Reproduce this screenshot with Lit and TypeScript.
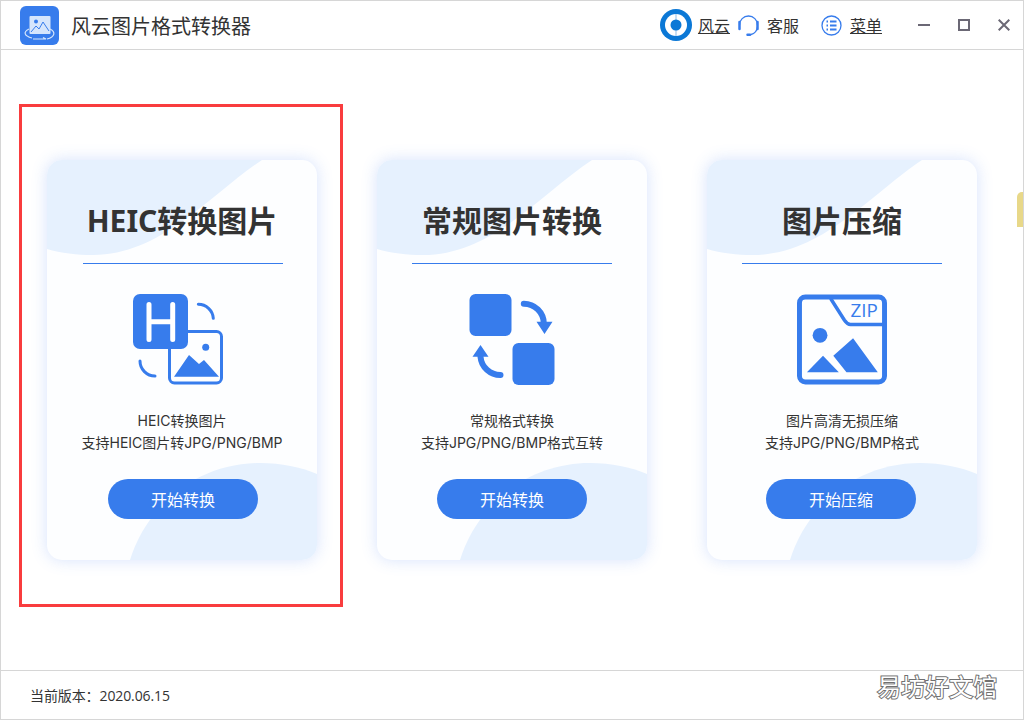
import { LitElement, html, css, svg } from "lit";
import { customElement } from "lit/decorators.js";

const BLUE = "#377cec";

const heicIcon = svg`<svg class="icon" width="90" height="91" viewBox="0 0 90 91">
  <rect x="36.5" y="37.5" width="52" height="51.5" rx="5" fill="none" stroke="${BLUE}" stroke-width="3"/>
  <circle cx="72.7" cy="53.3" r="3.5" fill="${BLUE}"/>
  <path d="M41 82.7 56 61l10 9 5-4 15 16.700z" fill="${BLUE}"/>
  <path d="M65.300 10.300A15 15 0 0 1 80.300 24.300M7 67A15 15 0 0 0 22 82" fill="none" stroke="${BLUE}" stroke-width="3" stroke-linecap="round"/>
  <rect width="55" height="55" rx="7" fill="${BLUE}"/>
  <path d="M16 10.500V45.500M39.700 10.500V45.500M16 27.700H39.700" fill="none" stroke="#fff" stroke-width="5" stroke-linecap="round"/>
</svg>`;

const convertIcon = svg`<svg class="icon" width="90" height="91" viewBox="-2.500 0 90 91">
  <rect width="42" height="42" rx="6" fill="${BLUE}"/>
  <rect x="43" y="49" width="42" height="42" rx="6" fill="${BLUE}"/>
  <path d="M54.300 9.700A20 20 0 0 1 74.300 29.300M31 81A20 20 0 0 1 11 62.700" fill="none" stroke="${BLUE}" stroke-width="6" stroke-linecap="round"/>
  <path d="M67 27.700H83L75 40zM3 62.700H19L11 51z" fill="${BLUE}"/>
</svg>`;

const zipIcon = svg`<svg class="icon" width="90" height="91" viewBox="0 0 91 91">
  <rect x="2.500" y="2.500" width="86" height="86" rx="6" fill="none" stroke="${BLUE}" stroke-width="5"/>
  <path d="M34 4 48 26Q51 30.300 54 30.300H87" fill="none" stroke="${BLUE}" stroke-width="3.500"/>
  <circle cx="23.300" cy="41.300" r="7.500" fill="${BLUE}"/>
  <path d="M56.700 44.300 81.700 78.700H50L36.700 62zM26.300 62 42.300 78.700H10z" fill="${BLUE}"/>
  <text x="68" y="23" class="zip" text-anchor="middle">ZIP</text>
</svg>`;

const cards = [
  { title: "HEIC转换图片", icon: heicIcon, l1: "HEIC转换图片", l2: "支持HEIC图片转JPG/PNG/BMP", btn: "开始转换" },
  { title: "常规图片转换", icon: convertIcon, l1: "常规格式转换", l2: "支持JPG/PNG/BMP格式互转", btn: "开始转换" },
  { title: "图片压缩", icon: zipIcon, l1: "图片高清无损压缩", l2: "支持JPG/PNG/BMP格式", btn: "开始压缩" },
];

@customElement("app-root")
export class AppRoot extends LitElement {
  static styles = css`
    :host {
      display: block;
      width: 1024px;
      height: 720px;
      font-family: "Open Sans", "Noto Sans CJK SC", sans-serif;
      color: #333;
    }
    .win {
      position: relative;
      box-sizing: border-box;
      width: 1024px;
      height: 720px;
      border: 1px solid #d6d6d6;
      background: #fff;
      display: flex;
      flex-direction: column;
      overflow: hidden;
    }
    .bar {
      height: 48px;
      flex: none;
      display: flex;
      align-items: center;
      border-bottom: 1px solid #d6d6d6;
      padding-left: 19px;
    }
    .logo { flex: none; }
    .app {
      margin-left: 12px;
      font-size: 20px;
      color: #333;
      flex: 1;
    }
    .tool {
      display: flex;
      align-items: center;
      font-size: 16px;
      color: #333;
    }
    .tool svg { flex: none; }
    .brand { margin-right: 8px; }
    .brand span { margin-left: 6px; text-decoration: underline; }
    .service { margin-right: 22px; }
    .service span { margin-left: 8px; }
    .menu { margin-right: 36px; }
    .menu span { margin-left: 8px; text-decoration: underline; }
    .ctrl { display: flex; gap: 28px; margin-right: 13px; }
    main {
      flex: 1;
      display: flex;
      gap: 60px;
      padding: 110px 0 0 46px;
    }
    .card {
      position: relative;
      box-sizing: border-box;
      width: 270px;
      height: 400px;
      border-radius: 15px;
      background: #fdfeff;
      box-shadow: 0 0 16px rgba(70, 125, 240, 0.22);
      overflow: hidden;
      display: flex;
      flex-direction: column;
      align-items: center;
      padding-top: 41px;
    }
    .deco { position: absolute; left: 0; top: 0; }
    .card > *:not(.deco) { position: relative; }
    h2 {
      margin: 0;
      font-family: "Noto Sans", "Noto Sans CJK SC", sans-serif;
      font-size: 30px;
      line-height: 40px;
      font-weight: 700;
      color: #333;
      white-space: nowrap;
    }
    .rule {
      width: 200px;
      height: 1px;
      margin-top: 22px;
      background: #377cec;
      flex: none;
    }
    .icon { margin-top: 30px; flex: none; display: block; }
    .zip { font: 500 19px "Open Sans", sans-serif; fill: #377cec; }
    p {
      margin: 25px 0 0;
      font-family: "Inter", "Noto Sans CJK SC", sans-serif;
      font-size: 14px;
      line-height: 22px;
      text-align: center;
      color: #333;
      white-space: nowrap;
    }
    button {
      margin-top: 25px;
      width: 150px;
      height: 40px;
      border: 0;
      border-radius: 20px;
      background: #377cec;
      color: #fff;
      font: inherit;
      font-size: 16px;
      padding: 0;
    }
    .c0 .rule, .c0 button { margin-left: 2px; }
    .c0 .icon { margin-right: 8px; }
    .c2 button { margin-right: 2px; }
    .c2 .icon { margin-right: 1px; }
    footer {
      height: 48px;
      flex: none;
      border-top: 1px solid #d6d6d6;
      display: flex;
      align-items: center;
      padding-left: 29px;
      font-size: 14px;
      letter-spacing: -0.1px;
      color: #333;
    }
    .mark {
      position: absolute;
      left: 876px;
      top: 670px;
      font-size: 24px;
      line-height: 32px;
      color: #fff;
      -webkit-text-stroke: 2px #707070;
      paint-order: stroke fill;
    }
    .tab {
      position: absolute;
      right: 0;
      top: 191px;
      width: 6px;
      height: 35px;
      background: #e8d889;
      border-radius: 5px 0 0 0;
    }
    .outline {
      position: absolute;
      left: 18px;
      top: 103px;
      width: 324px;
      height: 503px;
      box-sizing: border-box;
      border: 3px solid #f93c3e;
    }
  `;

  render() {
    return html`<div class="win">
      <header class="bar">
        <svg class="logo" width="39" height="39" viewBox="0 0 39 39">
          <rect width="39" height="39" rx="6" fill="${BLUE}"/>
          <rect x="9.500" y="10" width="21" height="18" rx="1" fill="#d5e5fc"/>
          <circle cx="16" cy="15.500" r="2" fill="${BLUE}"/>
          <path d="M11 26 16 20l3 3 4-7 6 9" fill="none" stroke="${BLUE}" stroke-width="1"/>
          <path d="M9 23C3 26 4 30 12 32M27 33C35 31 36 26 30 23" fill="none" stroke="#d5e5fc" stroke-width="1.200"/>
          <path d="M13 33H26L23 31.500" fill="none" stroke="#d5e5fc" stroke-width="1.200"/>
        </svg>
        <div class="app">风云图片格式转换器</div>
        <div class="tool brand">
          <svg width="32" height="32" viewBox="0 0 32 32">
            <circle cx="16" cy="16" r="16" fill="#0b78d6"/>
            <circle cx="16" cy="16" r="11" fill="#fff"/>
            <path d="M16 5V27" stroke="#8fbde8" stroke-width="1"/>
            <circle cx="16" cy="16" r="5.500" fill="#0b78d6"/>
          </svg>
          <span>风云</span>
        </div>
        <div class="tool service">
          <svg width="21" height="21" viewBox="0 0 21 21">
            <path d="M1.500 10A9 9 0 0 1 19.500 10M19.500 12A9 9 0 0 1 13 19.500" fill="none" stroke="${BLUE}" stroke-width="1.300"/>
            <path d="M1.500 7V14M19.500 7V14" stroke="${BLUE}" stroke-width="2.500" stroke-linecap="round"/>
            <path d="M9.500 19.800H12" stroke="${BLUE}" stroke-width="2.500" stroke-linecap="round"/>
          </svg>
          <span>客服</span>
        </div>
        <div class="tool menu">
          <svg width="21" height="21" viewBox="0 0 21 21">
            <circle cx="10.500" cy="10.500" r="9.500" fill="none" stroke="${BLUE}" stroke-width="1.300"/>
            <path d="M5.500 6.500H7M9 6.500H15.500M5.500 10.500H7M9 10.500H15.500M5.500 14.500H7M9 14.500H15.500" stroke="${BLUE}" stroke-width="1.800"/>
          </svg>
          <span>菜单</span>
        </div>
        <div class="ctrl">
          <svg width="12" height="12" viewBox="0 0 12 12"><path d="M0 6H12" stroke="#6b6875" stroke-width="2"/></svg>
          <svg width="12" height="12" viewBox="0 0 12 12"><rect x="1" y="1" width="10" height="10" fill="none" stroke="#6b6875" stroke-width="2"/></svg>
          <svg width="12" height="12" viewBox="0 0 12 12"><path d="M.700 .700 11.300 11.300M11.300 .700 .700 11.300" stroke="#6b6875" stroke-width="2"/></svg>
        </div>
      </header>
      <main>
        ${cards.map(
          (c, i) => html`<section class="card c${i}">
            <svg class="deco" width="270" height="400" viewBox="0 0 270 400">
              <path d="M0 0H215C165 33 115 95 46 95C30 95 14 93 0 89Z" fill="#e6f1fe"/>
              <path d="M83 400C100 345 150 303 213 303C235 303 253 307 270 314V400Z" fill="#e6f1fe"/>
            </svg>
            <h2>${c.title}</h2>
            <div class="rule"></div>
            ${c.icon}
            <p>${c.l1}<br />${c.l2}</p>
            <button>${c.btn}</button>
          </section>`
        )}
      </main>
      <footer>当前版本：2020.06.15</footer>
      <div class="mark">易坊好文馆</div>
      <div class="tab"></div>
      <div class="outline"></div>
    </div>`;
  }
}
